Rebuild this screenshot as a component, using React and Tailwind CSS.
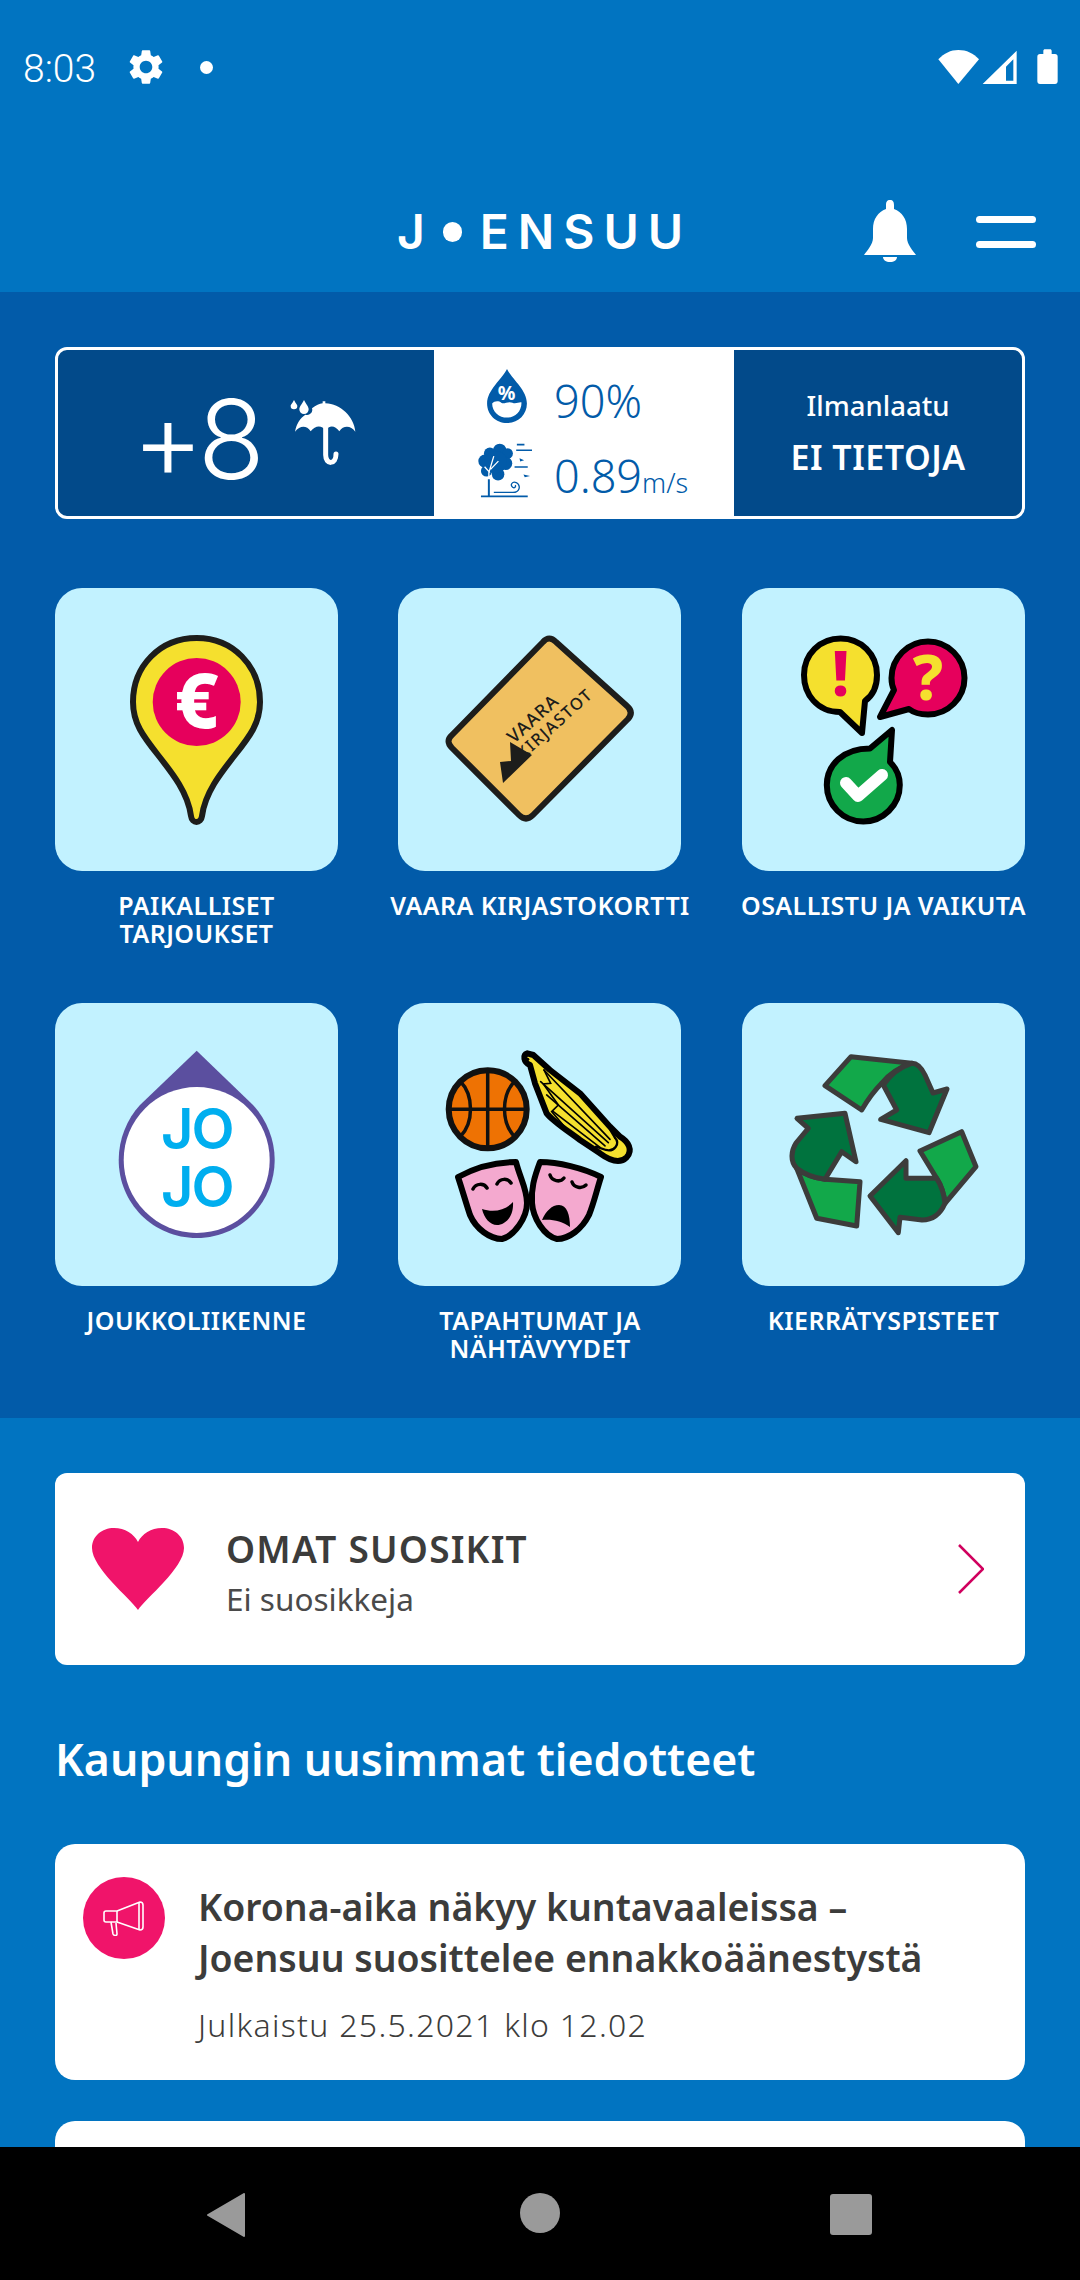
import { MdSettings } from "react-icons/md";

const plex = { fontFamily: '"Noto Sans", "Open Sans", sans-serif' };

const dark = "#1d1d1b";
const yellow = "#f5e02e";
const pink = "#e6005c";

function Pin() {
  return (
    <svg viewBox="0 0 283 283" className="w-full h-full">
      <path
        d="M141.7 50C178 50 205 78 205 114C205 135 195 148 180 167C165 186 150 205 147 228C146 236 137 236 136 228C133 205 118 186 103 167C88 148 78 135 78 114C78 78 105 50 141.7 50Z"
        fill={yellow}
        stroke={dark}
        strokeWidth="6"
      />
      <circle cx="141.7" cy="114" r="44" fill={pink} />
      <text x="141.7" y="140" textAnchor="middle" fontSize="76" fontWeight="800" fill="#fff" fontFamily="Noto Sans, sans-serif">€</text>
    </svg>
  );
}

function LibraryCard() {
  return (
    <svg viewBox="0 0 283 283" className="w-full h-full">
      <path
        d="M145 54Q151 47 158 54L229 118Q236 124 230 131L135 227Q128 234 121 227L54 160Q47 153 54 147Z"
        fill="#f0c060"
        stroke={dark}
        strokeWidth="6"
        strokeLinejoin="round"
      />
      <path d="M112 154L134 167L105 195L102 174L113 173Z" fill={dark} />
      <g fill={dark} fontFamily="Noto Sans, sans-serif" fontWeight="500">
        <text transform="translate(116 156) rotate(-42)" fontSize="18" letterSpacing="1">VAARA</text>
        <text transform="translate(125 172) rotate(-42)" fontSize="16.5" letterSpacing="1.5">KIRJASTOT</text>
      </g>
    </svg>
  );
}

function Bubbles() {
  return (
    <svg viewBox="0 0 283 283" className="w-full h-full">
      <g stroke="#000" strokeWidth="6" strokeLinejoin="round">
        <path d="M98.7 50.5C119 50.5 135 66 135 87C135 100 130 108 123 113L120 145L98 124C75 124 62 106 62 87C62 66 78 50.5 98.7 50.5Z" fill={yellow} />
        <path d="M186 53.5C206 53.5 222.5 70 222.5 90C222.5 110 206 126.5 186 126.5C178 126.5 172 125 167 121L138 129L152 102C150 98 149.5 94 149.5 90C149.5 70 166 53.5 186 53.5Z" fill={pink} />
        <path d="M150 142L148 174C155 181 157.8 188 157.8 197C157.8 217 141 233.5 121.3 233.5C101 233.5 84.8 217 84.8 197C84.8 177 101 160.5 128 160.5Z" fill="#12a84a" />
      </g>
      <text x="98.7" y="108" textAnchor="middle" fontSize="62" fontWeight="800" fill={pink} fontFamily="Noto Sans, sans-serif">!</text>
      <text x="186" y="112" textAnchor="middle" fontSize="62" fontWeight="800" fill={yellow} fontFamily="Noto Sans, sans-serif">?</text>
      <path d="M104 195L116 208L140 187" fill="none" stroke="#fff" strokeWidth="12" strokeLinecap="round" strokeLinejoin="round" />
    </svg>
  );
}

function JojoDrop() {
  return (
    <svg viewBox="0 0 283 283" className="w-full h-full">
      <path d="M141.7 47.7L198 102C211 116 219.7 136 219.7 157C219.7 200 185 235 141.7 235C98 235 63.7 200 63.7 157C63.7 136 72 116 85 102Z" fill="#5b4f9f" />
      <circle cx="141.7" cy="157" r="73" fill="#fff" />
      <g fill="#00aeef" fontFamily="Inter, sans-serif" fontWeight="600" textAnchor="middle" fontSize="56" letterSpacing="-2">
        <text x="141.7" y="146">JO</text>
        <text x="141.7" y="204">JO</text>
      </g>
    </svg>
  );
}

function Culture() {
  return (
    <svg viewBox="0 0 283 283" className="w-full h-full">
      {/* basketball */}
      <circle cx="89.7" cy="106.3" r="39" fill="#ee7203" stroke="#111" strokeWidth="6" />
      <g fill="none" stroke="#111" strokeWidth="3.5">
        <path d="M89.7 67V145M50.7 106.3H128.7" />
        <path d="M62 78C76 92 76 120 62 134" />
        <path d="M117 78C103 92 103 120 117 134" />
      </g>
      {/* harp, in the coordinates of a 3x crop */}
      <g transform="translate(122 37) scale(0.3333)">
        <path
          d="M22 40C8 45 10 66 30 75L45 130L80 220C100 245 140 270 180 300L240 340C270 362 300 372 320 352C340 330 325 305 300 290L270 260L180 160L90 90L40 45Z"
          fill={yellow}
          stroke="#000"
          strokeWidth="18"
          strokeLinejoin="round"
        />
        <circle cx="23" cy="58" r="5" fill="#000" />
        <g fill="none" stroke="#000" strokeWidth="5" strokeLinecap="round">
          <path d="M72 90L270 298" />
          <path d="M62 125L265 308" />
          <path d="M80 165L255 318" />
          <path d="M100 215L240 322" />
          <path d="M72 90L92 130L70 132L115 195L95 215L135 262" />
          <path d="M285 293C302 312 282 336 258 330L228 320" strokeWidth="7" />
          <path d="M268 265L285 293" strokeWidth="7" />
        </g>
      </g>
      {/* masks */}
      <path d="M60 174C78 164 98 159 118 159C122 175 129 186 129 200C129 215 116 233 104 236C92 236 78 226 72 212C68 200 64 186 60 174Z" fill="#f4a9cf" stroke="#000" strokeWidth="6" strokeLinejoin="round" />
      <path d="M75 186C78 180 86 180 89 185M99 181C102 175 110 175 113 180" fill="none" stroke="#000" strokeWidth="3.5" strokeLinecap="round" />
      <path d="M84 206C96 210 108 207 115 199C116 215 106 222 99 222C92 222 86 215 84 206Z" fill="#000" />
      <path d="M203 174C185 165 160 159 142 159C136 175 133 186 134 200C135 215 146 233 159 236C171 236 184 226 191 212C196 200 199 186 203 174Z" fill="#f4a9cf" stroke="#000" strokeWidth="6" strokeLinejoin="round" />
      <path d="M152 172C154 178 162 180 166 175M174 179C176 185 184 186 188 182" fill="none" stroke="#000" strokeWidth="3.5" strokeLinecap="round" />
      <path d="M144 217C148 208 154 202 161 202C169 202 172 212 172 224C164 218 154 216 144 217Z" fill="#000" />
    </svg>
  );
}

function Recycle() {
  const line = { stroke: "#3c3c3b", strokeWidth: 5, strokeLinejoin: "round" };
  return (
    <svg viewBox="0 0 283 283" className="w-full h-full">
      <path {...line} fill="#12a84a" d="M83 82.7L109 53.7L169.7 60.3C155 65 146 72 139.7 80.3C130 90 125 98 119.7 107Z" />
      <path {...line} fill="#00733e" d="M169.7 60.3C176 60 180 66 183 72L191 90L205 86L187 129.7L138.7 116.3L154.7 107L141.3 82C148 72 158 64 169.7 60.3Z" />
      <path {...line} fill="#12a84a" d="M54.7 165.3C62 171 72 175 83 176.3L118 178.7L114.7 223L74.7 215.3Z" />
      <path {...line} fill="#00733e" d="M103 110.3L114 158.7L99.7 148.7L83 176.3C72 175 62 171 54.7 165.3C48 158 49 148 54 140L66.3 125.3L55 115.3Z" />
      <path {...line} fill="#12a84a" d="M178 148L219.7 128.7L234 163.7L203 200.3C202 190 199 182 194.7 175.3Z" />
      <path {...line} fill="#00733e" d="M164 157.7L164 175.3L194.7 175.3C199 182 202 190 203 200.3C198 212 190 217 180 217L158 214.3L156.3 229.7L128 193Z" />
    </svg>
  );
}

const tiles = [
  { label: "PAIKALLISET TARJOUKSET", art: <Pin /> },
  { label: "VAARA KIRJASTOKORTTI", art: <LibraryCard />, wide: true },
  { label: "OSALLISTU JA VAIKUTA", art: <Bubbles />, wide: true },
  { label: "JOUKKOLIIKENNE", art: <JojoDrop /> },
  { label: "TAPAHTUMAT JA NÄHTÄVYYDET", art: <Culture /> },
  { label: "KIERRÄTYSPISTEET", art: <Recycle /> },
];

function StatusBar() {
  return (
    <div className="h-[134px] flex items-center justify-between pl-[23px] pr-[10px] text-white">
      <div className="flex items-center">
        <span className="w-[102px] pt-[4px] text-[39px] font-light" style={{ fontFamily: "Roboto, sans-serif" }}>8:03</span>
        <MdSettings className="w-[42px] h-[42px]" />
        <span className="ml-[33px] w-[13px] h-[13px] rounded-full bg-white" />
      </div>
      <svg viewBox="0 0 450 180" className="w-[150px] h-[60px] mt-[6px]" fill="#fff">
        <path d="M55 58C72 40 92 30 115 30C140 30 160 40 177 58L115 132Z" />
        <path fillRule="evenodd" d="M188 132L290 32V132ZM258 80V122H280V58Z" />
        <path d="M370 42V33C370 30 372 28 375 28H390C393 28 395 30 395 33V42H405C410 42 413 45 413 50V124C413 129 410 132 405 132H360C355 132 352 129 352 124V50C352 45 355 42 360 42Z" />
      </svg>
    </div>
  );
}

function Header() {
  return (
    <header className="h-[158px] pt-[38px] flex items-center relative">
      <div className="mx-auto flex items-center text-white text-[48px] font-semibold leading-none" style={{ fontFamily: "Inter, sans-serif" }}>
        <span>J</span>
        <span className="w-[19px] h-[20px] rounded-full bg-white ml-[18px] mr-[18px]" />
        <span className="tracking-[9px] -mr-[9px]">ENSUU</span>
      </div>
      <svg viewBox="0 0 52 62" className="absolute left-[864px] top-[66px] w-[52px] h-[62px]" fill="#fff">
        <path d="M26 0C29 0 30 2 30 5V9C38 12 43 19 43 29V38C43 44 49 51 52 55H0C3 51 9 44 9 38V29C9 19 14 12 22 9V5C22 2 23 0 26 0Z" />
        <path d="M19 57H33C33 60 30 62 26 62C22 62 19 60 19 57Z" />
      </svg>
      <div className="absolute left-[976px] top-[82px] w-[60px] flex flex-col gap-[18px]">
        <span className="h-[7px] bg-white rounded-full" />
        <span className="h-[7px] bg-white rounded-full" />
      </div>
    </header>
  );
}

function WeatherBox() {
  return (
    <div className="h-[172px] rounded-[12px] border-[3px] border-white bg-[#024a8a] flex overflow-hidden text-white" style={plex}>
      <div className="w-[376px] flex items-center pl-[74px]">
        <span className="w-[148px] pt-[12px] text-[110px] leading-none tracking-[-6px]" style={{ fontFamily: "Inter, sans-serif", fontWeight: 300 }}>+8</span>
        <svg viewBox="0 0 270 270" className="mt-[4px] w-[90px] h-[90px]" fill="#fff">
          <path d="M42 30C48 42 52 44 52 48A10 10 0 0 1 32 48C32 44 36 42 42 30Z" />
          <path d="M72 30C80 45 86 50 86 58A14 14 0 0 1 58 58C58 50 64 45 72 30Z" />
          <path d="M45 125C50 100 60 85 76 74C90 78 100 66 96 55C108 46 118 41 128 40V34H136V40C182 42 222 80 226 125C212 106 190 106 178 124C165 106 148 104 137 122C125 104 106 106 92 124C80 106 60 106 45 125Z" />
          <path d="M137 110V195C137 225 168 225 168 192" fill="none" stroke="#fff" strokeWidth="15" strokeLinecap="round" />
        </svg>
      </div>
      <div className="w-[300px] bg-white text-[#025ba9] flex flex-col pt-[13px] gap-[9px] pl-[44px]">
        <div className="flex items-center h-[66px]">
          <div className="w-[76px] pl-[9px]">
            <svg viewBox="50 28 118 160" className="w-[40px] h-[54px]">
              <path d="M109 28C125 60 168 90 168 130C168 163 142 188 109 188C76 188 50 163 50 130C50 90 93 60 109 28Z" fill="#025ba9" />
              <path d="M65 130C72 122 85 122 92 128C100 134 112 122 125 128C135 133 145 125 152 127C152 155 132 172 109 172C86 172 65 155 65 130Z" fill="#fff" />
              <text x="108" y="119" textAnchor="middle" fontSize="58" fontWeight="700" fill="#fff" fontFamily="Noto Sans, sans-serif">%</text>
            </svg>
          </div>
          <span className="pt-[8px] text-[45px] leading-none font-light">90%</span>
        </div>
        <div className="flex items-center h-[66px]">
          <div className="w-[76px]">
            <svg viewBox="25 250 165 170" className="w-[55px] h-[56px]">
              <g fill="#025ba9">
                <circle cx="90" cy="272" r="20" />
                <circle cx="60" cy="282" r="18" />
                <circle cx="114" cy="282" r="16" />
                <circle cx="45" cy="305" r="20" />
                <circle cx="108" cy="312" r="20" />
                <circle cx="50" cy="335" r="17" />
                <circle cx="85" cy="345" r="19" />
                <circle cx="78" cy="308" r="34" />
                <path d="M150 296L164 302L152 306ZM162 346L182 350L166 354Z" />
              </g>
              <path d="M57 372V340L72 290M60 340L44 322M62 330L86 305" fill="none" stroke="#fff" strokeWidth="4" />
              <g fill="none" stroke="#025ba9">
                <path d="M57 360V412" strokeWidth="6" />
                <path d="M33 412H175" strokeWidth="6" />
                <path d="M142 255H165M140 272H188M135 323H175" strokeWidth="5" />
                <path d="M72 400H130C150 400 156 380 140 370C128 365 120 378 130 385C135 388 140 382 137 378" strokeWidth="4" />
              </g>
            </svg>
          </div>
          <span className="pt-[8px] text-[45px] leading-none font-light">0.89<span className="text-[27px]">m/s</span></span>
        </div>
      </div>
      <div className="flex-1 flex flex-col items-center justify-center gap-[20px] leading-none">
        <span className="text-[27.5px] font-medium">Ilmanlaatu</span>
        <span className="text-[34px] font-semibold tracking-[0.5px]">EI TIETOJA</span>
      </div>
    </div>
  );
}

function Tile({ tile }) {
  return (
    <div className="flex flex-col">
      <div className="w-[283px] h-[283px] rounded-[27px] bg-[#c2f2ff]">{tile.art}</div>
      <div className={`mt-[20px] h-[56px] self-center text-center text-white text-[25px] leading-[28px] font-semibold tracking-[0.45px] ${tile.wide ? "w-[330px]" : "w-[280px]"}`}>
        {tile.label}
      </div>
    </div>
  );
}

export default function App() {
  return (
    <div className="w-[1080px] h-[2280px] flex flex-col overflow-hidden bg-[#0174c1]" style={plex}>
      <div className="flex-1 overflow-hidden">
        <StatusBar />
        <Header />
        <section className="bg-[#025ba9] h-[1126px] px-[55px] pt-[55px]">
          <WeatherBox />
          <div className="mt-[69px] grid grid-cols-[283px_284px_283px] gap-x-[60px] gap-y-[56px]">
            {tiles.map((tile) => (
              <Tile key={tile.label} tile={tile} />
            ))}
          </div>
        </section>
        <section className="px-[55px] pt-[55px]">
          <div className="h-[192px] bg-white rounded-[12px] flex items-center pl-[37px] pr-[41px]">
            <svg viewBox="0 0 92 82" className="w-[92px] h-[82px]" fill="#f0146a">
              <path d="M46 82C38 70 0 40 0 20C0 8 10 0 22 0C33 0 42 6 46 14C50 6 59 0 70 0C82 0 92 8 92 20C92 40 54 70 46 82Z" />
            </svg>
            <div className="ml-[42px] pt-[8px] flex-1 text-[#3c3c3b]">
              <div className="text-[37px] leading-[46px] font-semibold tracking-[1.2px]">OMAT SUOSIKIT</div>
              <div className="text-[31.5px] leading-[42px] mt-[6px] text-[#4a4a4a]">Ei suosikkeja</div>
            </div>
            <svg viewBox="0 0 26 50" className="w-[26px] h-[50px]" fill="none" stroke="#d0005e" strokeWidth="2.5">
              <path d="M1 1L25 25L1 49" />
            </svg>
          </div>
          <h2 className="mt-[64px] text-[44.6px] leading-[60px] font-semibold text-white">Kaupungin uusimmat tiedotteet</h2>
          <article className="mt-[55px] h-[236px] bg-white rounded-[20px] flex pl-[28px] pt-[33px]">
            <div className="w-[82px] h-[82px] rounded-full bg-[#f0146a] flex items-center justify-center">
              <svg viewBox="0 0 42 36" className="w-[42px] h-[36px]" fill="none" stroke="#fff" strokeWidth="1.6" strokeLinejoin="round">
                <path d="M3 11H14L37 2C39 2 40 3 40 5V27C40 29 39 30 37 30L14 22H3C1 22 1 21 1 20V13C1 12 1 11 3 11Z" />
                <path d="M14 11V22M36 3V29" />
                <path d="M8 22L10 34C11 36 14 36 14 34L13 23" />
              </svg>
            </div>
            <div className="ml-[33px] pt-[4px] text-[#3c3c3b]">
              <div className="text-[37.4px] leading-[51px] font-semibold whitespace-nowrap">
                Korona-aika näkyy kuntavaaleissa –<br />Joensuu suosittelee ennakkoäänestystä
              </div>
              <div className="mt-[22px] text-[32px] leading-[40px] font-light tracking-[1.3px]">Julkaistu 25.5.2021 klo 12.02</div>
            </div>
          </article>
          <div className="mt-[41px] h-[200px] bg-white rounded-[20px]" />
        </section>
      </div>
      <nav className="h-[133px] shrink-0 bg-black flex items-start justify-center pt-[46px] relative">
        <svg viewBox="0 0 38 44" className="absolute left-[207px] top-[46px] w-[38px] h-[44px]" fill="#9a9a9a">
          <path d="M37 1V43L1 22Z" stroke="#9a9a9a" strokeLinejoin="round" strokeWidth="2" />
        </svg>
        <span className="w-[40px] h-[40px] rounded-full bg-[#9a9a9a]" />
        <span className="absolute left-[830px] top-[47px] w-[42px] h-[41px] rounded-[3px] bg-[#9a9a9a]" />
      </nav>
    </div>
  );
}
